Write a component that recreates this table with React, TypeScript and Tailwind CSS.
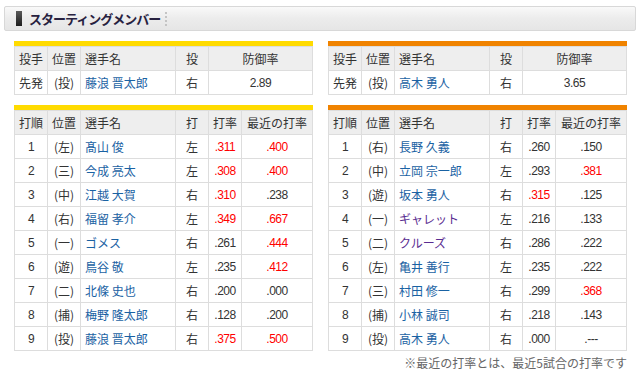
import React from 'react';

type Batter = { no: number; pos: string; name: string; foreign?: boolean; bat: string; avg: string; recent: string; avgHot?: boolean; recentHot?: boolean };

const tigers: Batter[] = [
  { no: 1, pos: '左', name: '髙山 俊', bat: '左', avg: '.311', recent: '.400', avgHot: true, recentHot: true },
  { no: 2, pos: '三', name: '今成 亮太', bat: '左', avg: '.308', recent: '.400', avgHot: true, recentHot: true },
  { no: 3, pos: '中', name: '江越 大賀', bat: '右', avg: '.310', recent: '.238', avgHot: true },
  { no: 4, pos: '右', name: '福留 孝介', bat: '左', avg: '.349', recent: '.667', avgHot: true, recentHot: true },
  { no: 5, pos: '一', name: 'ゴメス', bat: '右', avg: '.261', recent: '.444', recentHot: true },
  { no: 6, pos: '遊', name: '鳥谷 敬', bat: '左', avg: '.235', recent: '.412', recentHot: true },
  { no: 7, pos: '二', name: '北條 史也', bat: '右', avg: '.200', recent: '.000' },
  { no: 8, pos: '捕', name: '梅野 隆太郎', bat: '右', avg: '.128', recent: '.200' },
  { no: 9, pos: '投', name: '藤浪 晋太郎', bat: '右', avg: '.375', recent: '.500', avgHot: true, recentHot: true },
];

const marines: Batter[] = [
  { no: 1, pos: '右', name: '長野 久義', bat: '右', avg: '.260', recent: '.150' },
  { no: 2, pos: '中', name: '立岡 宗一郎', bat: '左', avg: '.293', recent: '.381', recentHot: true },
  { no: 3, pos: '遊', name: '坂本 勇人', bat: '右', avg: '.315', recent: '.125', avgHot: true },
  { no: 4, pos: '一', name: 'ギャレット', foreign: true, bat: '左', avg: '.216', recent: '.133' },
  { no: 5, pos: '二', name: 'クルーズ', foreign: true, bat: '右', avg: '.286', recent: '.222' },
  { no: 6, pos: '左', name: '亀井 善行', bat: '左', avg: '.235', recent: '.222' },
  { no: 7, pos: '三', name: '村田 修一', bat: '右', avg: '.299', recent: '.368', recentHot: true },
  { no: 8, pos: '捕', name: '小林 誠司', bat: '右', avg: '.218', recent: '.143' },
  { no: 9, pos: '投', name: '高木 勇人', bat: '右', avg: '.000', recent: '.---' },
];

const th = 'border border-[#dddddd] bg-[#eeeeee] font-normal text-center h-[24px] p-0';
const td = 'border border-[#dddddd] bg-white text-center h-[24px] p-0';
const num = "font-['Liberation_Sans',sans-serif] text-[12px] tracking-[-0.5px]";

function PitcherTable({ bar, name, era }: { bar: string; name: string; era: string }) {
  return (
    <div className="w-[299px]">
      <div className={`h-[5px] ${bar}`} />
      <table className="w-full border-collapse table-fixed">
        <colgroup>
          <col className="w-[33px]" />
          <col className="w-[33px]" />
          <col className="w-[95px]" />
          <col className="w-[33px]" />
          <col />
        </colgroup>
        <thead>
          <tr>
            <th className={th}>投手</th>
            <th className={th}>位置</th>
            <th className={`${th} !text-left pl-[4px]`}>選手名</th>
            <th className={th}>投</th>
            <th className={th}>防御率</th>
          </tr>
        </thead>
        <tbody>
          <tr>
            <td className={td}>先発</td>
            <td className={td}>(投)</td>
            <td className={`${td} !text-left pl-[4px] text-[#1a62a3]`}>{name}</td>
            <td className={td}>右</td>
            <td className={`${td} ${num}`}>{era}</td>
          </tr>
        </tbody>
      </table>
    </div>
  );
}

function LineupTable({ bar, rows }: { bar: string; rows: Batter[] }) {
  return (
    <div className="w-[299px]">
      <div className={`h-[5px] ${bar}`} />
      <table className="w-full border-collapse table-fixed">
        <colgroup>
          <col className="w-[33px]" />
          <col className="w-[33px]" />
          <col className="w-[95px]" />
          <col className="w-[33px]" />
          <col className="w-[33px]" />
          <col />
        </colgroup>
        <thead>
          <tr>
            <th className={th}>打順</th>
            <th className={th}>位置</th>
            <th className={`${th} !text-left pl-[4px]`}>選手名</th>
            <th className={th}>打</th>
            <th className={th}>打率</th>
            <th className={th}>最近の打率</th>
          </tr>
        </thead>
        <tbody>
          {rows.map((r) => (
            <tr key={r.no}>
              <td className={`${td} ${num}`}>{r.no}</td>
              <td className={td}>({r.pos})</td>
              <td className={`${td} !text-left pl-[4px] ${r.foreign ? 'text-[#5a2d91]' : 'text-[#1a62a3]'}`}>{r.name}</td>
              <td className={td}>{r.bat}</td>
              <td className={`${td} ${num} ${r.avgHot ? 'text-[#ff0000]' : ''}`}>{r.avg}</td>
              <td className={`${td} ${num} ${r.recentHot ? 'text-[#ff0000]' : ''}`}>{r.recent}</td>
            </tr>
          ))}
        </tbody>
      </table>
    </div>
  );
}

export default function App() {
  return (
    <div className="w-[640px] h-[375px] bg-white text-[#333333] text-[12px] leading-none font-['Noto_Sans_CJK_JP',sans-serif] pt-[6px]">
      <div className="mx-[4px] h-[25px] border border-[#d8d8d8] rounded-[2px] bg-gradient-to-b from-[#f9f9f9] via-[#ececec] to-[#e6e6e6] flex items-center pl-[11px]">
        <div className="w-[6px] h-[15px] bg-gradient-to-b from-[#5a5a5a] to-[#1e1e1e]" />
        <span className="ml-[7px] text-[13px] tracking-[-1px] text-[#27213f] font-bold">スターティングメンバー</span>
        <div className="ml-[5px] h-[14px] border-l-2 border-dotted border-[#c4c4c4]" />
      </div>

      <div className="mt-[10px] flex gap-[15px] pl-[14px]">
        <PitcherTable bar="bg-[#ffdb00]" name="藤浪 晋太郎" era="2.89" />
        <PitcherTable bar="bg-[#f08300]" name="高木 勇人" era="3.65" />
      </div>

      <div className="mt-[10px] flex gap-[15px] pl-[14px]">
        <LineupTable bar="bg-[#ffdb00]" rows={tigers} />
        <LineupTable bar="bg-[#f08300]" rows={marines} />
      </div>

      <p className="mt-[6px] w-[627px] text-right text-[#666666] text-[12px]">※最近の打率とは、最近5試合の打率です</p>
    </div>
  );
}
